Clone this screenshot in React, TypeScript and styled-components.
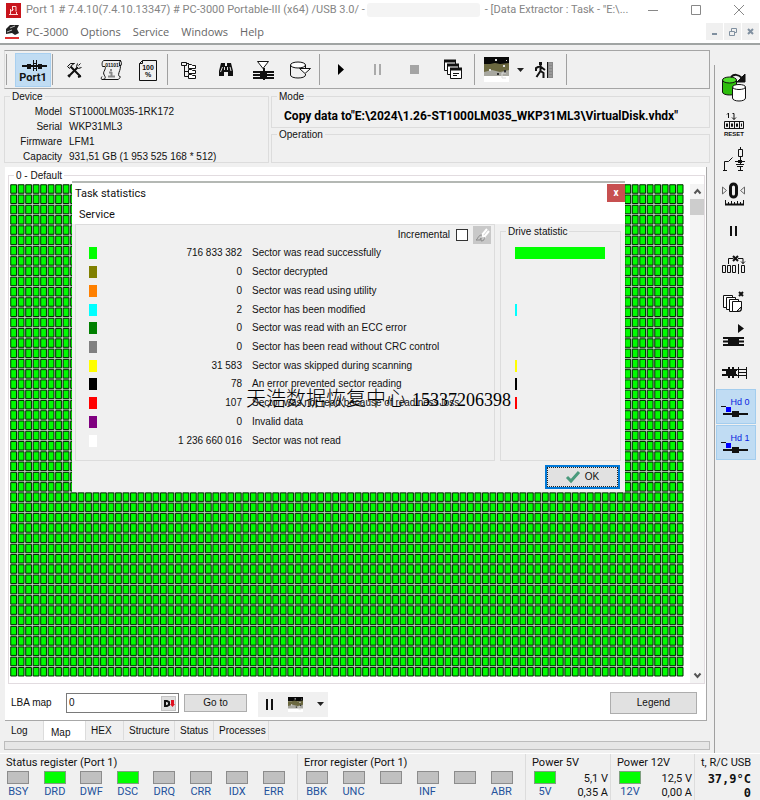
import React from 'react';
import styled, { createGlobalStyle, css } from 'styled-components';

const ui = '"Liberation Sans", Arial, sans-serif';
const segoe = 'Roboto, "Open Sans", sans-serif';
const menuFont = '"Open Sans", "Noto Sans", sans-serif';

const GlobalStyle = createGlobalStyle`
  * { box-sizing: border-box; }
  body { margin: 0; background: #f0f0f0; color: #111; font: 10px/14px ${ui}; }
  button, input { font: inherit; color: inherit; }
  button { padding: 0; border: 0; background: none; }
  svg { display: block; overflow: visible; flex: none; }
`;

const Window = styled.div`
  position: relative;
  display: flex;
  flex-direction: column;
  min-height: 100vh;
`;

/* ---------- caption and menu ---------- */
const TitleBar = styled.header`
  display: flex;
  align-items: center;
  height: 20px;
  padding: 0 0 0 6px;
  background: #fff;
  color: #858585;
  font: 11px/20px ${segoe};
  white-space: nowrap;
`;
const TitleText = styled.span`
  margin-left: 5px;
`;
const Redacted = styled.span`
  width: 113px;
  height: 14px;
  margin-left: 2px;
  border-radius: 3px;
  background: #f4f4f4;
`;
const Captions = styled.div`
  display: flex;
  margin-left: auto;
`;
const CaptionButton = styled.button`
  display: flex;
  align-items: center;
  justify-content: center;
  width: 43px;
  height: 20px;
`;
const MenuBar = styled.nav`
  display: flex;
  align-items: center;
  height: 25px;
  padding: 0 1px 0 5px;
  background: #fff;
  border-bottom: 2px solid #a0a4a3;
  color: #666;
  font: 11px/22px ${menuFont};
`;
const MenuItem = styled.button`
  margin-right: 12px;
`;
const MdiButtons = styled.div`
  display: flex;
  gap: 1px;
  margin-left: auto;
`;
const MdiButton = styled.button`
  display: flex;
  align-items: center;
  justify-content: center;
  width: 17px;
  height: 17px;
  background: #f0f0f0;
`;

/* ---------- main split ---------- */
const Body = styled.div`
  display: flex;
  flex: 1;
  padding-top: 5px;
`;
const Main = styled.main`
  display: flex;
  flex: 1;
  flex-direction: column;
  min-width: 0;
  padding: 0 4px 3px 4px;
`;
const Toolbar = styled.div`
  display: flex;
  align-items: center;
  height: 39px;
  border: 1px solid #a5a5a5;
  border-left-color: #ddd;
`;
const Separator = styled.span<{ $before?: number; $gap?: number }>`
  width: 1px;
  height: 31px;
  margin: 0 ${(p) => p.$gap ?? 2}px 0 ${(p) => p.$before ?? 1}px;
  background: #a0a0a0;
`;
const ToolButton = styled.button<{ $w?: number; $on?: boolean }>`
  display: flex;
  align-items: center;
  justify-content: center;
  width: ${(p) => p.$w ?? 37}px;
  height: 34px;
  ${(p) => p.$on && css`background: #c0dcf3; border: 1px solid #a9d0f0;`}
`;

const InfoRow = styled.section`
  display: flex;
  gap: 2px;
  height: 73px;
  margin-top: 1px;
`;
const Group = styled.fieldset<{ $grow?: boolean }>`
  position: relative;
  min-width: 0;
  margin: 0;
  padding: 0;
  border: 1px solid #dcdcdc;
  ${(p) => p.$grow && 'flex: 1;'}
`;
const Legend = styled.legend`
  margin-left: 5px;
  padding: 0 2px;
  line-height: 13px;
`;
const DeviceGroup = styled(Group)`
  width: 265px;
`;
const InfoRight = styled.div`
  display: flex;
  flex: 1;
  flex-direction: column;
  min-width: 0;
`;
const ModeGroup = styled(Group)`
  height: 38px;
`;
const ModeText = styled.p`
  margin: 6px 0 0 12px;
  font: bold 12px/14px ${segoe};
  color: #000;
  white-space: nowrap;
`;
const DeviceList = styled.dl`
  display: grid;
  grid-template-columns: 57px 1fr;
  column-gap: 7px;
  margin: 0;
  padding-top: 1px;
  line-height: 15px;
  dt { text-align: right; }
  dd { margin: 0; }
`;

const MapPanel = styled.section`
  display: flex;
  flex: 1;
  flex-direction: column;
  margin: 4px 3px 0 1px;
  background: #fff;
  border: solid #a8a8a8;
  border-width: 0 1px 1px 0;
`;
const MapGroup = styled(Group)`
  display: flex;
  flex: 1;
  margin: 2px 1px 0 3px;
  border-color: #e2dce0;
`;
const MapRow = styled.div`
  display: flex;
  width: 100%;
  height: 100%;
  padding: 2px 0 0 1px;
`;
const MapCanvas = styled.div`
  flex: 1;
  margin-bottom: 6px;
  svg { width: 100%; height: 100%; }
`;
const ScrollBar = styled.div`
  display: flex;
  flex-direction: column;
  align-items: center;
  width: 14px;
  margin-left: 6px;
  background: #f4f4f4;
`;
const ScrollButton = styled.button`
  display: flex;
  align-items: center;
  justify-content: center;
  width: 14px;
  height: 15px;
`;
const Thumb = styled.div`
  width: 14px;
  height: 16px;
  margin-bottom: auto;
  background: #cdcdcd;
`;

const Controls = styled.div`
  display: flex;
  align-items: center;
  height: 36px;
  padding: 2px 9px 0 6px;
`;
const LbaLabel = styled.label`
  width: 55px;
`;
const LbaBox = styled.div`
  display: flex;
  align-items: center;
  width: 113px;
  height: 20px;
  margin-right: 5px;
  padding: 0 2px;
  border: 1px solid #7a7a7a;
`;
const LbaInput = styled.input`
  flex: 1;
  min-width: 0;
  padding: 0;
  border: 0;
  outline: 0;
`;
const LbaButton = styled.button`
  width: 15px;
  height: 15px;
  background: #dedede;
  border: 1px solid #c4c4c4;
`;
const PushButton = styled.button<{ $w: number; $h: number }>`
  width: ${(p) => p.$w}px;
  height: ${(p) => p.$h}px;
  background: #e1e1e1;
  border: 1px solid #adadad;
`;
const MapTools = styled.div`
  display: flex;
  align-items: center;
  gap: 14px;
  width: 70px;
  height: 25px;
  margin: 2px auto 0 11px;
  padding-left: 8px;
  background: #f0f0f0;
`;

const Tabs = styled.div`
  display: flex;
  height: 20px;
  margin-left: 2px;
`;
const Tab = styled.button<{ $w: number; $on?: boolean }>`
  width: ${(p) => p.$w}px;
  height: 19px;
  padding: ${(p) => (p.$on ? '4px 0 0 7px' : '0 0 0 5px')};
  border-right: 1px solid #dcdcdc;
  background: ${(p) => (p.$on ? '#fff' : 'transparent')};
  text-align: left;
`;
const Progress = styled.div`
  height: 9px;
  background: #e6e6e6;
  border: 1px solid #bcbcbc;
`;

const SideBar = styled.aside`
  display: flex;
  flex-direction: column;
  width: 46px;
  margin-top: 15px;
  padding: 0 4px 0 1px;
  gap: 1px;
  border-left: 1px solid #a0a0a0;
`;
const SideButton = styled.button<{ $on?: boolean }>`
  width: 40px;
  height: 35px;
  background: ${(p) => (p.$on ? '#c0dcf3' : 'transparent')};
  outline: ${(p) => (p.$on ? '1px solid #a3cdee' : '0')};
  outline-offset: -1px;
`;

/* ---------- status strip ---------- */
const StatusBar = styled.footer`
  display: flex;
  height: 47px;
  border-top: 1px solid #fff;
  font: 11px/14px ${segoe};
`;
const StatusGroup = styled.section<{ $w?: number }>`
  ${(p) => (p.$w ? `width: ${p.$w}px;` : 'flex: 1;')}
  padding: 2px 2px 0 0;
  border-right: 1px solid #dcdcdc;
  &:last-child { border: 0; }
`;
const StatusTitle = styled.h2`
  margin: 0 0 0 6px;
  font: inherit;
  white-space: nowrap;
`;
const Lamps = styled.div<{ $n: number }>`
  display: grid;
  grid-template-columns: repeat(${(p) => p.$n}, 1fr);
  padding-right: 3px;
`;
const Lamp = styled.div<{ $on?: boolean }>`
  display: flex;
  flex-direction: column;
  align-items: center;
  color: #24529c;
  &::before {
    content: '';
    width: 20px;
    height: 11px;
    margin: 1px 0;
    border: 1px solid ${(p) => (p.$on ? '#7fa07f' : '#8c8c8c')};
    background: ${(p) => (p.$on ? '#00ff00' : '#c0c0c0')};
  }
`;
const PowerRow = styled.div`
  display: flex;
  justify-content: space-between;
  padding-left: 8px;
`;
const Readings = styled.div`
  padding-top: 2px;
  text-align: right;
  line-height: 14px;
`;
const Temperature = styled(Readings)`
  font: bold 12px/14px "DejaVu Sans Mono", monospace;
  padding-right: 7px;
`;

/* ---------- dialog ---------- */
const Dialog = styled.div`
  position: absolute;
  top: 181px;
  left: 72px;
  width: 553px;
  padding-bottom: 3px;
  border-top: 2px solid #b4b8b4;
  background: #f0f0f0;
`;
const DialogHead = styled.div`
  height: 41px;
  padding-left: 3px;
  background: #fff;
  font: 11px/21px ${segoe};
  color: #111;
`;
const DialogTitle = styled.div`
  display: flex;
  justify-content: space-between;
`;
const CloseButton = styled.button`
  width: 18px;
  height: 18px;
  margin-top: 1px;
  background: #c75050;
  color: #fff;
  font: bold 10px/16px ${segoe};
`;
const DialogMenu = styled.button`
  display: block;
  margin-left: 4px;
`;
const DialogBody = styled.div`
  display: flex;
  gap: 5px;
  padding: 0 4px 0 3px;
`;
const StatsPane = styled.section`
  flex: 1;
  height: 237px;
  border: 1px solid #dcdcdc;
`;
const StatsTools = styled.div`
  display: flex;
  align-items: center;
  justify-content: flex-end;
  height: 19px;
  padding-right: 3px;
`;
const Check = styled.input`
  appearance: none;
  width: 12px;
  height: 12px;
  margin: 0 5px 0 6px;
  background: #fff;
  border: 1px solid #333;
`;
const BrushButton = styled.button`
  width: 18px;
  height: 18px;
  background: #c8c8c8;
`;
const StatsTable = styled.table`
  width: 100%;
  height: 206px;
  border-collapse: collapse;
  table-layout: fixed;
  td { padding: 0; line-height: 14px; }
  td:nth-child(1) { width: 22px; padding-left: 13px; }
  td:nth-child(2) { width: 144px; text-align: right; }
  td:nth-child(3) { padding-left: 10px; }
`;
const Swatch = styled.span<{ $c: string }>`
  display: block;
  width: 8px;
  height: 12px;
  background: ${(p) => p.$c};
`;
const DrivePane = styled(Group)`
  width: 121px;
  margin-top: 1px;
`;
const Bars = styled.div`
  display: grid;
  grid-auto-rows: 1fr;
  align-items: center;
  height: 206px;
  margin-top: 6px;
  padding-left: 14px;
`;
const Bar = styled.span<{ $c: string; $w: number }>`
  width: ${(p) => p.$w}px;
  height: 12px;
  background: ${(p) => p.$c};
`;
const DialogFoot = styled.div`
  display: flex;
  justify-content: flex-end;
  padding: 4px 5px 0 0;
`;
const OkButton = styled.button`
  display: flex;
  align-items: center;
  justify-content: center;
  gap: 5px;
  width: 75px;
  height: 24px;
  background: #e1e1e1;
  border: 2px solid #0078d7;
  outline: 1px dotted #222;
  outline-offset: -3px;
`;
const Watermark = styled.div`
  position: absolute;
  top: 385px;
  left: 246px;
  color: #000;
  font: 300 20px/26px "Noto Sans CJK SC", sans-serif;
  white-space: nowrap;
`;
const WatermarkPhone = styled.span`
  margin-left: 6px;
  font: 18px/26px "Liberation Serif", serif;
`;

/* ---------- drawings ---------- */
const Glyph = ({ w = 28, h = 28, children }: { w?: number; h?: number; children: React.ReactNode }) => (
  <svg width={w} height={h} viewBox={`0 0 ${w} ${h}`} fill="none" stroke="#111" aria-hidden="true">
    {children}
  </svg>
);
const Pause = ({ color = '#111' }) => (
  <Glyph w={8} h={11}>
    <path d="M0 0h2v11H0zM5 0h2v11H5z" fill={color} stroke="none" />
  </Glyph>
);
const Caret = () => (
  <Glyph w={7} h={4}><path d="M0 0h7L3.500 4z" fill="#222" stroke="none" /></Glyph>
);
const MapPicture = ({ w, h }: { w: number; h: number }) => (
  <svg width={w} height={h} viewBox="0 0 25 25" preserveAspectRatio="none" aria-hidden="true">
    <path d="M0 0h25v25H0z" fill="#fff" />
    <path d="M0 0h25v7H0z" fill="#080808" />
    <path d="M0 7h6l5-1 5 1 9-1v9H0z" fill="#6b6840" />
    <path d="M0 15l8-2 8 2 9-2v6H0z" fill="#a8a8a0" />
    <path d="M11 2h2v2h-2zM19 8h2v2h-2zM5 12h2v2H5zM22 3h1v1h-1z" fill="#ddd" />
    <path d="M13 16h2v2h-2zM20 13h2v3h-2z" fill="#333" />
    <path d="M22 16h-4v5h4" fill="none" stroke="#ddd" />
  </svg>
);

const PortIcon = () => (
  <Glyph w={34} h={32}>
    <path d="M6 12h25" strokeWidth="2" />
    <path d="M11 10h4v5h-4zM22 10h4v5h-4z" fill="#111" stroke="none" />
    <path d="M17.500 6v11M20.500 6v11M17 9.500h4M17 14.500h4" />
    <text x="17" y="27" fontSize="11" fontWeight="bold" fontFamily="Roboto" fill="#111" stroke="none" textAnchor="middle">Port1</text>
  </Glyph>
);
const ToolsIcon = () => (
  <Glyph>
    <path d="M9 20L19 10M8 19l2 2" strokeWidth="2" />
    <path d="M10 10l10 10M18 21l3-1" strokeWidth="2" />
    <path d="M7.500 10.500l3-3h4l-2 1-3 4zM17.500 7.500l-1 3 2 2 3-1M20.500 7.500l-2 2" fill="#ddd" />
  </Glyph>
);
const ScrollIcon = () => (
  <Glyph>
    <path d="M7 4.500h17c-2 1-2 3-1 5s0 4-1 7 0 4 1 4-1 3-2 3H5c2 0 4-1 3-3s-2-3-1-5 2-4 1-5H5.500c-1-3 0-6 1.500-6zM5 20.500c-1 1-1 3 0 3M22 9.500h2c1-2 0-5-1-5" />
    <text x="15" y="11" fontSize="5" fontWeight="bold" fontFamily="Liberation Sans" fill="#111" stroke="none" textAnchor="middle">01101</text>
    <path d="M14 13v2M12 16.500h3M14.500 16v4M11 20.500h7" stroke="#888" strokeWidth="2" />
  </Glyph>
);
const PercentIcon = () => (
  <Glyph>
    <path d="M8.500 4.500h14v20h-17v-17zM8.500 4.500v3h-3" />
    <text x="14" y="14" fontSize="7" fontWeight="bold" fontFamily="Liberation Sans" fill="#111" stroke="none" textAnchor="middle">100</text>
    <text x="14" y="21" fontSize="7" fontWeight="bold" fontFamily="Liberation Sans" fill="#111" stroke="none" textAnchor="middle">%</text>
  </Glyph>
);
const TreeIcon = () => (
  <Glyph>
    <path d="M6.500 6.500h5v3h-5zM9.500 10v10.500M11 7.500h3M9.500 15.500h4M9.500 20.500h4" />
    <path d="M13.500 8.500h3l1 1h3v3h-7zM13.500 13.500h3l1 1h3v3h-7zM13.500 18.500h3l1 1h3v3h-7z" fill="#fff" />
  </Glyph>
);
const BinocularsIcon = () => (
  <Glyph>
    <path d="M9 7h4v3h2V7h4l2 8v5h-5v-4h-4v4H7v-5z" fill="#111" stroke="none" />
    <path d="M10.500 11l-2 5M12.500 11v3M15.500 11v3M18 11l1 4" stroke="#ddd" />
  </Glyph>
);
const ChipFunnelIcon = () => (
  <Glyph>
    <path d="M8.500 5.500h11l-5.500 7z" fill="#fff" />
    <path d="M4 16h21M4 19h21M4 22h21" strokeWidth="2" />
    <path d="M11 15h7v8h-7zM14 12h2v12h-2z" fill="#111" stroke="none" />
  </Glyph>
);
const DiskFunnelIcon = () => (
  <Glyph>
    <ellipse cx="12" cy="9" rx="7.500" ry="3" fill="#fff" />
    <path d="M4.500 9v10c0 4 15 4 15 0v-1M19.500 9v3" />
    <path d="M13.500 12.500h11l-5.500 5z" fill="#fff" />
  </Glyph>
);
const CascadeIcon = () => (
  <Glyph>
    {[[5, 4], [8, 8], [11, 12]].map(([x, y]) => (
      <g key={x}>
        <path d={`M${x}.5 ${y}.5h11v10h-11z`} fill="#fff" />
        <path d={`M${x} ${y + 1}h12`} strokeWidth="3" />
      </g>
    ))}
    <path d="M14 17.500h6M14 19.500h4" />
  </Glyph>
);
const ExitIcon = () => (
  <Glyph>
    <path d="M9 6h3v3H9z" fill="#111" stroke="none" />
    <path d="M10.500 9v6l-4 6M10.500 15l3 2v5M10 10l-4 2v3M11 11l4 3" strokeWidth="2" />
    <path d="M17 6h6v16h-6z" fill="#888" stroke="none" />
    <path d="M17.500 6v16" />
    <path d="M19 8h3M19 11h3M19 14h3M19 17h3M19 20h3" stroke="#aaa" />
  </Glyph>
);

const sideIcons: { name: string; art: React.ReactNode; on?: boolean }[] = [
  {
    name: 'Switch drive',
    art: (
      <>
        <path d="M6.500 15v12c0 4 14 4 14 0V15" fill="#2dbd0c" />
        <ellipse cx="13.500" cy="15" rx="7" ry="3" fill="#4ee02a" />
        <path d="M16.500 22v11c0 4 13 4 13 0V22" fill="#fff" />
        <ellipse cx="23" cy="22" rx="6.500" ry="2.500" fill="#fff" />
        <path d="M15 12c3-3 7-3 11 1" strokeWidth="2" />
        <path d="M29 9v8h-8z" fill="#111" />
      </>
    ),
  },
  {
    name: 'Reset',
    art: (
      <>
        <path d="M11 13.500l1.500-1.500v5M16.500 12.500h1.500v6M16 16.500l2 2 2-2" />
        <path d="M8.500 20.500h19v7h-19zM13.500 20v8M18.500 20v8M23.500 20v8M10.500 22.500v3h1v-3M15.500 22.500v3h1v-3M20.500 22.500v3h1v-3M25.500 22.500v3" />
        <text x="18" y="35" fontSize="6" fontWeight="bold" fontFamily="Liberation Sans" fill="#111" stroke="none" textAnchor="middle">RESET</text>
      </>
    ),
  },
  {
    name: 'Power switch',
    art: (
      <>
        <path d="M7 33.500h4M8.500 33v-8.500h4l4-4M19 24.500h10M24.500 10v2M24.500 20v7" />
        <path d="M22.500 12.500h4v7h-4zM20 27.500h8M21 29.500h6M24.500 30v3M22 33.500h5" />
        <path d="M22 23h4v3h-4z" fill="#111" stroke="none" />
      </>
    ),
  },
  {
    name: 'Recalibrate',
    art: (
      <>
        <rect x="14.500" y="11" width="6" height="13" rx="3" strokeWidth="3" />
        <path d="M6.500 14v7l4-3.500zM28.500 14v7l-4-3.500z" stroke="#666" />
        <path d="M9 31.500h19" strokeWidth="2" />
        <path d="M9.500 27v4M12.500 29v2M15.500 28v3M18.500 29v2M21.500 28v3M24.500 29v2M27.500 27v4" />
      </>
    ),
  },
  { name: 'Pause', art: <path d="M14 17h2v10h-2zM19 17h2v10h-2z" fill="#111" stroke="none" /> },
  {
    name: 'Sector remap',
    art: (
      <>
        <path d="M6.500 20.500h3v7h-3zM11.500 20.500h3v7h-3zM16.500 20.500h3v7h-3zM22.500 19v10M25.500 20.500h3v7h-3zM12.500 19v-5.500h5M22 13.500h5V19M25 16.500l2 2 2-2" />
        <path d="M17 11l5 5M22 11l-5 5" strokeWidth="2" />
      </>
    ),
  },
  {
    name: 'Copy stack',
    art: (
      <>
        <path d="M7.500 14.500h9v12h-9z" fill="#fff" />
        <path d="M10.500 16.500h9v12h-9z" fill="#fff" />
        <path d="M13.500 18.500h9v12h-9z" fill="#fff" />
        <path d="M16.500 20.500h9v8l-2 2h-7zM21 30l4-4v4z" fill="#fff" />
        <path d="M23 11l4 4M27 11l-4 4" strokeWidth="2" />
      </>
    ),
  },
  {
    name: 'Run chip',
    art: (
      <>
        <path d="M22 7v9l6-4.500z" fill="#111" stroke="none" />
        <path d="M7 21h21M7 24.500h21M7 28h21" strokeWidth="2" />
        <path d="M12 22h11v5H12zM14 20h7v9h-7z" fill="#111" stroke="none" />
      </>
    ),
  },
  {
    name: 'Chip link',
    art: (
      <>
        <path d="M6 17h15M6 22h15" strokeWidth="2" />
        <path d="M10 16h10v7H10zM12 14h2v11h-2zM16 14h2v11h-2z" fill="#111" stroke="none" />
        <path d="M30.500 14v12M20 16.500h10M20 22.500h10M23 19.500h7M22.500 14v11" />
      </>
    ),
  },
  ...[0, 1].map((n) => ({
    name: `Head ${n}`,
    on: true,
    art: (
      <>
        <text x="24" y="16" fontSize="9" fontFamily="Liberation Sans" fill="#0a1ee0" stroke="none" textAnchor="middle">{`Hd ${n}`}</text>
        <path d="M5 17.500h5" />
        <path d="M10 18h5v5h-5z" fill="#00f" stroke="none" />
        <path d="M7 25h25" strokeWidth="2" />
        <path d="M16 22h7v6h-7z" fill="#111" stroke="none" />
      </>
    ),
  })),
];

/* Sector map: cells of 30 x 40 units that stretch with the panel. */
const COLS = 90;
const ROWS = 48;
const cellPath = Array.from({ length: ROWS }, (_, r) =>
  Array.from({ length: COLS }, (_, c) => `M${c * 30 + 3} ${r * 40 + 3}h23v33h-23z`).join(''),
).join('');
const SectorMap = () => (
  <svg viewBox={`0 0 ${COLS * 30} ${ROWS * 40}`} preserveAspectRatio="none" role="img" aria-label="Sector map">
    <path d={`M1 1h${COLS * 30 - 4}v${ROWS * 40 - 4}H1z`} fill="#c4cdc4" />
    <path d={cellPath} fill="#00fc00" stroke="#032e03" strokeWidth="1" vectorEffect="non-scaling-stroke" />
  </svg>
);

const stats: { c: string; n: string; label: string; bar: number }[] = [
  { c: '#00ff00', n: '716 833 382', label: 'Sector was read successfully', bar: 90 },
  { c: '#808000', n: '0', label: 'Sector decrypted', bar: 0 },
  { c: '#ff8000', n: '0', label: 'Sector was read using utility', bar: 0 },
  { c: '#00ffff', n: '2', label: 'Sector has been modified', bar: 2 },
  { c: '#008000', n: '0', label: 'Sector was read with an ECC error', bar: 0 },
  { c: '#808080', n: '0', label: 'Sector has been read without CRC control', bar: 0 },
  { c: '#ffff00', n: '31 583', label: 'Sector was skipped during scanning', bar: 2 },
  { c: '#000000', n: '78', label: 'An error prevented sector reading', bar: 2 },
  { c: '#ff0000', n: '107', label: 'Sector was not read because of readiness loss', bar: 2 },
  { c: '#800080', n: '0', label: 'Invalid data', bar: 0 },
  { c: '#ffffff', n: '1 236 660 016', label: 'Sector was not read', bar: 0 },
];

export default function App() {
  return (
    <Window>
      <GlobalStyle />
      <TitleBar>
        <Glyph w={15} h={15}>
          <path d="M0 0h15v15H0z" fill="#c8141c" stroke="none" />
          <path d="M3 11.500h9M4.500 8.500l3-2M6.500 3v5M7 3.500h3v5M4.500 6v5M10.500 9v2" stroke="#ffd8d8" />
        </Glyph>
        <TitleText>Port 1 # 7.4.10(7.4.10.13347) # PC-3000 Portable-III (x64) /USB 3.0/ -</TitleText>
        <Redacted />
        <TitleText>- [Data Extractor : Task - "E:\...</TitleText>
        <Captions>
          <CaptionButton aria-label="Minimize"><Glyph w={10} h={10}><path d="M0 5.500h10" stroke="#888" /></Glyph></CaptionButton>
          <CaptionButton aria-label="Maximize"><Glyph w={10} h={10}><path d="M.5.5h9v9h-9z" stroke="#888" /></Glyph></CaptionButton>
          <CaptionButton aria-label="Close"><Glyph w={10} h={10}><path d="M0 0l10 10M10 0L0 10" stroke="#888" /></Glyph></CaptionButton>
        </Captions>
      </TitleBar>
      <MenuBar>
        <Glyph w={21} h={15}>
          <path d="M1 5l4-4h9l-2 4 2 4-4 2-3-2-6 1z" fill="#222" stroke="none" />
          <path d="M5 4l5-2M2 8l5-2" stroke="#bbb" />
          <path d="M0 14h14" stroke="#e03030" strokeWidth="2" />
        </Glyph>
        <MenuItem>PC-3000</MenuItem>
        <MenuItem>Options</MenuItem>
        <MenuItem>Service</MenuItem>
        <MenuItem>Windows</MenuItem>
        <MenuItem>Help</MenuItem>
        <MdiButtons>
          <MdiButton aria-label="Minimize task"><Glyph w={7} h={7}><path d="M1 6h5" stroke="#8090a0" strokeWidth="2" /></Glyph></MdiButton>
          <MdiButton aria-label="Restore task"><Glyph w={8} h={8}><path d="M.5 3.500h5v4h-5zM2.500 3V.5h5v4H6" stroke="#8090a0" /></Glyph></MdiButton>
          <MdiButton aria-label="Close task"><Glyph w={7} h={7}><path d="M1 1l5 5M6 1L1 6" stroke="#8090a0" strokeWidth="2" /></Glyph></MdiButton>
        </MdiButtons>
      </MenuBar>

      <Body>
        <Main>
          <Toolbar>
            <Separator $gap={8} />
            <ToolButton $on $w={36} aria-label="Port 1"><PortIcon /></ToolButton>
            <Separator />
            <ToolButton aria-label="Tools"><ToolsIcon /></ToolButton>
            <ToolButton aria-label="Script"><ScrollIcon /></ToolButton>
            <ToolButton aria-label="Percent"><PercentIcon /></ToolButton>
            <Separator />
            <ToolButton aria-label="Tree"><TreeIcon /></ToolButton>
            <ToolButton aria-label="Find"><BinocularsIcon /></ToolButton>
            <ToolButton aria-label="Chip filter"><ChipFunnelIcon /></ToolButton>
            <ToolButton aria-label="Disk filter"><DiskFunnelIcon /></ToolButton>
            <Separator />
            <ToolButton aria-label="Start"><Glyph w={6} h={11}><path d="M0 0v11l6-5.500z" fill="#000" stroke="none" /></Glyph></ToolButton>
            <ToolButton aria-label="Pause task"><Pause color="#aaa" /></ToolButton>
            <ToolButton aria-label="Stop"><Glyph w={9} h={9}><path d="M0 0h9v9H0z" fill="#a4a4a4" stroke="none" /></Glyph></ToolButton>
            <ToolButton $w={40} aria-label="Cascade"><CascadeIcon /></ToolButton>
            <Separator />
            <ToolButton $w={38} aria-label="Map view"><MapPicture w={25} h={25} /></ToolButton>
            <ToolButton $w={10} aria-label="Map options"><Caret /></ToolButton>
            <ToolButton aria-label="Exit"><ExitIcon /></ToolButton>
            <Separator $before={4} />
          </Toolbar>

          <InfoRow>
            <DeviceGroup>
              <Legend>Device</Legend>
              <DeviceList>
                <dt>Model</dt><dd>ST1000LM035-1RK172</dd>
                <dt>Serial</dt><dd>WKP31ML3</dd>
                <dt>Firmware</dt><dd>LFM1</dd>
                <dt>Capacity</dt><dd>931,51 GB (1 953 525 168 * 512)</dd>
              </DeviceList>
            </DeviceGroup>
            <InfoRight>
              <ModeGroup>
                <Legend>Mode</Legend>
                <ModeText>Copy data to"E:\2024\1.26-ST1000LM035_WKP31ML3\VirtualDisk.vhdx"</ModeText>
              </ModeGroup>
              <Group $grow>
                <Legend>Operation</Legend>
              </Group>
            </InfoRight>
          </InfoRow>

          <MapPanel>
            <MapGroup>
              <Legend>0 - Default</Legend>
              <MapRow>
                <MapCanvas><SectorMap /></MapCanvas>
                <ScrollBar>
                  <ScrollButton aria-label="Scroll up"><Glyph w={7} h={5}><path d="M.5 4.500l3-3.500 3 3.500" stroke="#555" strokeWidth="2" /></Glyph></ScrollButton>
                  <Thumb />
                  <ScrollButton aria-label="Scroll down"><Glyph w={7} h={5}><path d="M.5.5l3 3.500 3-3.500" stroke="#555" strokeWidth="2" /></Glyph></ScrollButton>
                </ScrollBar>
              </MapRow>
            </MapGroup>
            <Controls>
              <LbaLabel htmlFor="lba">LBA map</LbaLabel>
              <LbaBox>
                <LbaInput id="lba" defaultValue="0" />
                <LbaButton aria-label="Decimal">
                  <Glyph w={13} h={13}>
                    <path d="M3 4h2l2 1v3l-2 1H3z" strokeWidth="2" />
                    <path d="M9 3h3v4h1l-2.500 3L8 7h1z" fill="#e01020" stroke="none" />
                  </Glyph>
                </LbaButton>
              </LbaBox>
              <PushButton $w={63} $h={18}>Go to</PushButton>
              <MapTools>
                <Pause />
                <MapPicture w={15} h={15} />
                <Caret />
              </MapTools>
              <PushButton $w={87} $h={22}>Legend</PushButton>
            </Controls>
          </MapPanel>

          <Tabs role="tablist">
            <Tab role="tab" $w={38}>Log</Tab>
            <Tab role="tab" $w={42} $on>Map</Tab>
            <Tab role="tab" $w={38}>HEX</Tab>
            <Tab role="tab" $w={51}>Structure</Tab>
            <Tab role="tab" $w={39}>Status</Tab>
            <Tab role="tab" $w={55}>Processes</Tab>
          </Tabs>
          <Progress />
        </Main>

        <SideBar>
          {sideIcons.map((s) => (
            <SideButton key={s.name} $on={s.on} aria-label={s.name}>
              <Glyph w={40} h={35}>{s.art}</Glyph>
            </SideButton>
          ))}
        </SideBar>
      </Body>

      <StatusBar>
        <StatusGroup $w={298}>
          <StatusTitle>Status register (Port 1)</StatusTitle>
          <Lamps $n={8}>
            {['BSY', 'DRD', 'DWF', 'DSC', 'DRQ', 'CRR', 'IDX', 'ERR'].map((t) => (
              <Lamp key={t} $on={t === 'DRD' || t === 'DSC'}>{t}</Lamp>
            ))}
          </Lamps>
        </StatusGroup>
        <StatusGroup>
          <StatusTitle>Error register (Port 1)</StatusTitle>
          <Lamps $n={6}>
            {['BBK', 'UNC', '', 'INF', '', 'ABR'].map((t, i) => (
              <Lamp key={i}>{t}</Lamp>
            ))}
          </Lamps>
        </StatusGroup>
        <StatusGroup $w={85}>
          <StatusTitle>Power 5V</StatusTitle>
          <PowerRow>
            <Lamp $on>5V</Lamp>
            <Readings>5,1 V<br />0,35 A</Readings>
          </PowerRow>
        </StatusGroup>
        <StatusGroup $w={84}>
          <StatusTitle>Power 12V</StatusTitle>
          <PowerRow>
            <Lamp $on>12V</Lamp>
            <Readings>12,5 V<br />0,00 A</Readings>
          </PowerRow>
        </StatusGroup>
        <StatusGroup $w={65}>
          <StatusTitle>t, R/C USB</StatusTitle>
          <Temperature>37,9°C<br />0</Temperature>
        </StatusGroup>
      </StatusBar>

      <Dialog role="dialog" aria-label="Task statistics">
        <DialogHead>
          <DialogTitle>
            <span>Task statistics</span>
            <CloseButton aria-label="Close statistics">x</CloseButton>
          </DialogTitle>
          <DialogMenu>Service</DialogMenu>
        </DialogHead>
        <DialogBody>
          <StatsPane>
            <StatsTools>
              <label htmlFor="incremental">Incremental</label>
              <Check id="incremental" type="checkbox" />
              <BrushButton aria-label="Clear">
                <Glyph w={18} h={18}>
                  <path d="M14 3l-5 6M16 5l-5 6M9 9l3 3" stroke="#fff" strokeWidth="2" />
                  <path d="M9 9c-4 0-4 4-6 5h4l1-2v3c3 0 4-2 3-4" stroke="#8a8a8a" />
                </Glyph>
              </BrushButton>
            </StatsTools>
            <StatsTable>
              <tbody>
                {stats.map((s) => (
                  <tr key={s.label}>
                    <td><Swatch $c={s.c} /></td>
                    <td>{s.n}</td>
                    <td>{s.label}</td>
                  </tr>
                ))}
              </tbody>
            </StatsTable>
          </StatsPane>
          <DrivePane>
            <Legend>Drive statistic</Legend>
            <Bars>
              {stats.map((s) => <Bar key={s.label} $c={s.c} $w={s.bar} />)}
            </Bars>
          </DrivePane>
        </DialogBody>
        <DialogFoot>
          <OkButton>
            <Glyph w={14} h={12}><path d="M1 6l4 4L13 1" stroke="#4a9a7c" strokeWidth="3" /></Glyph>
            OK
          </OkButton>
        </DialogFoot>
      </Dialog>
      <Watermark>天浩数据恢复中心<WatermarkPhone>15337206398</WatermarkPhone></Watermark>
    </Window>
  );
}
